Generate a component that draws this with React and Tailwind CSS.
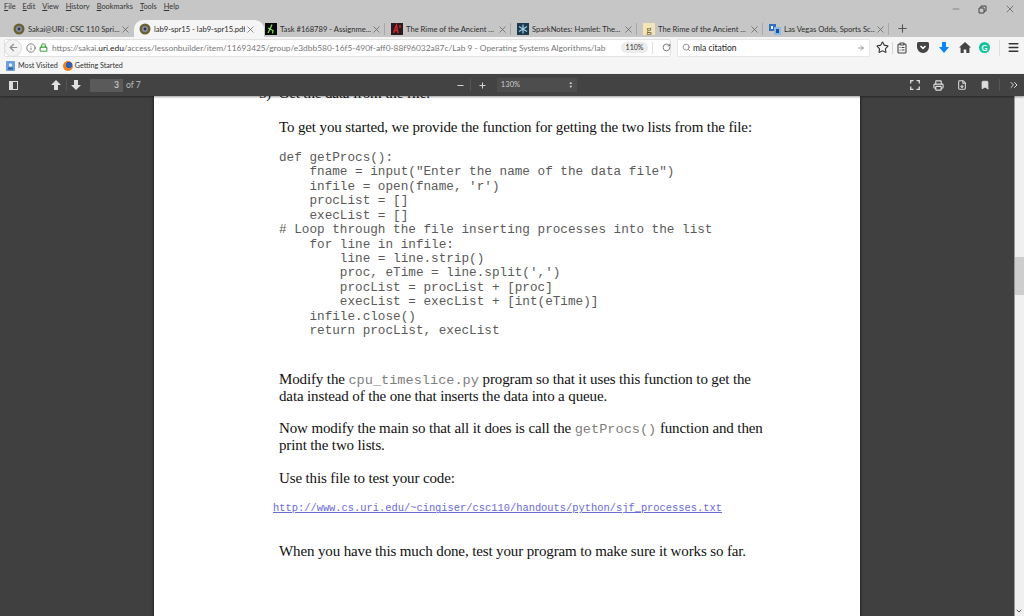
import { Star, ArrowRight, Search, Info, Lock, RotateCw, ArrowLeft, Plus, Minus, X, Menu, ClipboardList, Printer, Bookmark, ChevronsRight, ChevronDown, FileDown } from 'lucide-react';

const tabs = [
  { title: 'Sakai@URI : CSC 110 Spri...', icon: 'sakai' },
  { title: 'lab9-spr15 - lab9-spr15.pdf', icon: 'sakai', active: true },
  { title: 'Task #168789 - Assignme...', icon: 'task', sep: true },
  { title: 'The Rime of the Ancient ...', icon: 'rime', sep: true },
  { title: 'SparkNotes: Hamlet: The...', icon: 'spark', sep: true },
  { title: 'The Rime of the Ancient ...', icon: 'g', sep: true },
  { title: 'Las Vegas Odds, Sports Sc...', icon: 'vegas', sep: true },
];

const code = [
  'def getProcs():',
  '    fname = input("Enter the name of the data file")',
  "    infile = open(fname, 'r')",
  '    procList = []',
  '    execList = []',
  '# Loop through the file inserting processes into the list',
  '    for line in infile:',
  '        line = line.strip()',
  "        proc, eTime = line.split(',')",
  '        procList = procList + [proc]',
  '        execList = execList + [int(eTime)]',
  '    infile.close()',
  '    return procList, execList',
];

function Favicon({ type }) {
  if (type === 'sakai') {
    return (
      <svg width="12" height="12" viewBox="0 0 12 12" className="shrink-0">
        <circle cx="6" cy="6" r="5.5" fill="#6b6233" />
        <circle cx="6" cy="6" r="3" fill="#8c8fa8" />
        <circle cx="6" cy="6" r="1.4" fill="#2f3350" />
      </svg>
    );
  }
  if (type === 'task') {
    return (
      <svg width="12" height="12" viewBox="0 0 12 12" className="shrink-0">
        <rect width="12" height="12" fill="#050505" />
        <path d="M7 1.5 5 6 3 10M5 6l3 1.5-.5 3M5 6 3 5" stroke="#7fe05a" strokeWidth="1.3" fill="none" />
      </svg>
    );
  }
  if (type === 'rime') {
    return (
      <svg width="12" height="12" viewBox="0 0 12 12" className="shrink-0">
        <rect width="12" height="12" fill="#2a1a20" />
        <path d="M2.5 10 5.5 2 7 10M3.5 7.5h3M9 2v3" stroke="#d0252d" strokeWidth="1.4" fill="none" />
      </svg>
    );
  }
  if (type === 'spark') {
    return (
      <svg width="12" height="12" viewBox="0 0 12 12" className="shrink-0">
        <rect width="12" height="12" fill="#1d3a4d" />
        <path d="M6 1.5v9M2 3.5l8 5M10 3.5l-8 5" stroke="#9ed0e8" strokeWidth="1.2" />
      </svg>
    );
  }
  if (type === 'g') {
    return (
      <span className="flex h-3 w-3 shrink-0 items-center justify-center bg-[#f2e5b8] font-['Liberation_Serif',serif] text-[11px] leading-none text-[#6b4f1f]">g</span>
    );
  }
  return (
    <svg width="12" height="12" viewBox="0 0 12 12" className="shrink-0">
      <rect x="0" y="1" width="7" height="7" fill="#2f6fc4" />
      <rect x="5" y="4" width="7" height="8" fill="#8db8e8" />
      <rect x="2" y="3" width="2" height="3" fill="#fff" />
      <rect x="7" y="6" width="3" height="4" fill="#1d4f96" />
    </svg>
  );
}

function Tab({ title, icon, active, sep }) {
  return (
    <div className={`flex h-[18px] shrink-0 items-center pr-[2px] ${active ? '-mr-[3px] -ml-[1px] w-[130px] rounded-t-[9px] bg-[#f5f5f5] pl-[5px]' : 'w-[126px] pl-[4px]'}`}>
      <Favicon type={icon} />
      <span className="ml-[3px] flex-1 overflow-hidden whitespace-pre font-['Lato',sans-serif] text-[7.6px] leading-[18px] text-[#2e2e2e]">{title}</span>
      <X size={11} strokeWidth={1.4} className={`shrink-0 text-[#555] ${active ? 'mr-[6px]' : 'mr-[2px]'}`} />
      {sep && <span className="h-[12px] w-px shrink-0 bg-[#a9a9a9]" />}
    </div>
  );
}

function Para({ className = '', children }) {
  return <p className={`whitespace-pre font-['Liberation_Serif',serif] text-[15px] leading-[17px] tracking-[-0.13px] text-[#111] ${className}`}>{children}</p>;
}

function Mono({ children }) {
  return <span className="font-['Liberation_Mono',monospace] text-[13.6px] tracking-normal text-[#808080]">{children}</span>;
}

function MenuItem({ first, rest }) {
  return <span><span className="underline">{first}</span>{rest}</span>;
}

export default function App() {
  return (
    <div className="flex h-[616px] w-[1024px] flex-col overflow-hidden bg-[#c6c6c6] font-['Lato',sans-serif]">
      {/* menu bar + window buttons */}
      <div className="flex h-[20px] shrink-0 items-start justify-between">
        <div className="flex gap-[7px] pl-[4px] pt-[1px] text-[7.4px] leading-[12px] text-[#333]">
          <MenuItem first="F" rest="ile" />
          <MenuItem first="E" rest="dit" />
          <MenuItem first="V" rest="iew" />
          <MenuItem first="H" rest="istory" />
          <MenuItem first="B" rest="ookmarks" />
          <MenuItem first="T" rest="ools" />
          <MenuItem first="H" rest="elp" />
        </div>
        <div className="flex items-center gap-[17px] pr-[8px] pt-[3px] text-[#444]">
          <Minus size={10} strokeWidth={1.2} />
          <svg width="9" height="9" viewBox="0 0 9 9" fill="none" stroke="currentColor"><path d="M1 3h5v5H1zM3 3V1h5v5H6" /></svg>
          <X size={12} strokeWidth={1.2} />
        </div>
      </div>

      {/* tabs */}
      <div className="flex h-[17px] shrink-0 items-start pl-[9px]">
        {tabs.map((t, i) => <Tab key={i} {...t} />)}
        <Plus size={13} strokeWidth={2} className="ml-[5px] mt-[2px] text-[#555]" />
      </div>

      {/* nav bar */}
      <div className="flex h-[21px] shrink-0 items-center bg-[#f5f5f5] pl-[4px]">
        <div className="relative flex h-[18px] w-[667px] items-center rounded-[2px] border border-[#e2e2e2] bg-white pl-[20px]">
          <span className="absolute left-[-1px] top-[-1px] flex h-[18px] w-[18px] items-center justify-center rounded-full border border-[#dcdcdc] bg-[#f3f3f3]">
            <ArrowLeft size={11} strokeWidth={2.6} className="text-[#8f8f8f]" />
          </span>
          <Info size={10} className="ml-[1px] shrink-0 text-[#666]" />
          <Lock size={9} strokeWidth={3} className="ml-[3px] shrink-0 text-[#3fa33f]" />
          <span className="ml-[4px] w-[554px] shrink-0 overflow-hidden whitespace-pre text-[8.4px] leading-[16px] text-[#777]">
            https://sakai.<span className="text-[#222]">uri.edu</span>/access/lessonbuilder/item/11693425/group/e3dbb580-16f5-490f-aff0-88f96032a87c/Lab 9 - Operating Systems Algorithms/lab9-sp
          </span>
          <span className="ml-[15px] flex h-[11px] w-[27px] shrink-0 items-center justify-center rounded-full bg-[#ececec] text-[7px] text-[#333]">110%</span>
          <span className="ml-[4px] h-[12px] w-px shrink-0 bg-[#ddd]" />
          <RotateCw size={9} className="ml-[9px] shrink-0 text-[#555]" />
        </div>
        <div className="ml-[6px] flex h-[18px] w-[193px] items-center border border-[#e8e8e8] bg-white pl-[4px] pr-[4px]">
          <Search size={9} className="text-[#777]" />
          <span className="ml-[2px] flex-1 text-[8.5px] leading-[16px] text-[#222]">mla citation</span>
          <ArrowRight size={8} strokeWidth={2.5} className="text-[#888]" />
        </div>
        <Star size={13} strokeWidth={2} className="ml-[6px] text-[#333]" />
        <span className="ml-[3px] h-[12px] w-px bg-[#d5d5d5]" />
        <ClipboardList size={12} strokeWidth={2.2} className="ml-[3px] text-[#444]" />
        <svg width="12" height="11" viewBox="0 0 12 11" className="ml-[9px]">
          <path d="M1.5 0h9A1.5 1.5 0 0 1 12 1.5V5a6 6 0 0 1-12 0V1.5A1.5 1.5 0 0 1 1.5 0z" fill="#444" />
          <path d="M3.5 4 6 6.4 8.5 4" stroke="#fff" strokeWidth="1.5" fill="none" />
        </svg>
        <svg width="10" height="11" viewBox="0 0 10 11" className="ml-[10px]"><path d="M3 0h4v5h3L5 11 0 5h3z" fill="#0a84ff" /></svg>
        <svg width="12" height="11" viewBox="0 0 12 11" className="ml-[10px]"><path d="M6 0 12 5.6h-1.6V11H7.3V7.4H4.7V11H1.6V5.6H0z" fill="#444" /></svg>
        <span className="ml-[8px] flex h-[11px] w-[11px] items-center justify-center rounded-full bg-[#15c39a] text-[8px] font-bold leading-none text-white">G</span>
        <span className="ml-[9px] h-[16px] w-px bg-[#e0e0e0]" />
        <Menu size={13} strokeWidth={2.5} className="ml-[7px] text-[#333]" />
      </div>

      {/* bookmarks */}
      <div className="flex h-[16px] shrink-0 items-center bg-[#f5f5f5] pl-[6px] text-[7.2px] text-[#333]">
        <svg width="9" height="10" viewBox="0 0 9 10"><rect width="9" height="10" rx="1" fill="#6d9fdc" /><circle cx="4.5" cy="4" r="1.7" fill="#e7f0fb" /><rect x="2" y="6.5" width="5" height="2" fill="#2c5e9f" /></svg>
        <span className="ml-[3px]">Most Visited</span>
        <span className="ml-[5px] h-[10px] w-[10px] rounded-full bg-[radial-gradient(circle_at_60%_40%,#2e5fb8_35%,#f0801e_40%)]" />
        <span className="ml-[2px]">Getting Started</span>
      </div>

      {/* pdf toolbar */}
      <div className="z-10 flex h-[22px] shrink-0 items-center bg-[#434343] pl-[9px] text-[8.6px] text-[#bdbdbd] shadow-[0_1px_2px_rgba(0,0,0,0.4)]">
        <svg width="9" height="9" viewBox="0 0 9 9" className="text-[#ddd]" fill="none" stroke="currentColor"><rect x="0.5" y="0.5" width="8" height="8" /><rect x="1" y="1" width="2.5" height="7" fill="currentColor" /></svg>
        <svg width="10" height="10" viewBox="0 0 10 10" className="ml-[33px]"><path d="M5 0 10 5H7v5H3V5H0z" fill="#e0e0e0" /></svg>
        <span className="ml-[5px] h-[12px] w-px bg-[#555]" />
        <svg width="10" height="10" viewBox="0 0 10 10" className="ml-[4px]"><path d="M5 10 0 5h3V0h4v5h3z" fill="#e0e0e0" /></svg>
        <span className="ml-[9px] flex h-[13px] w-[33px] items-center justify-end bg-[#5a5a5a] pr-[4px] text-[#ddd]">3</span>
        <span className="ml-[3px]">of 7</span>
        <Minus size={9} strokeWidth={2.5} className="ml-[315px] text-[#ddd]" />
        <span className="ml-[5px] h-[12px] w-px bg-[#555]" />
        <Plus size={9} strokeWidth={2.5} className="ml-[7px] text-[#ddd]" />
        <span className="ml-[10px] flex h-[14px] w-[80px] items-center justify-between bg-[#4d4d4d] pl-[4px] pr-[4px] text-[7.6px] text-[#ccc]">
          130%
          <span className="flex flex-col text-[4px] leading-[4px] text-[#ddd]"><span>▲</span><span>▼</span></span>
        </span>
        <svg width="10" height="10" viewBox="0 0 10 10" className="ml-[333px]" fill="none" stroke="#ddd" strokeWidth="1.3"><path d="M0.7 3.5V.7h2.8M6.5.7h2.8v2.8M9.3 6.5v2.8H6.5M3.5 9.3H.7V6.5" /></svg>
        <Printer size={11} strokeWidth={2.5} className="ml-[13px] text-[#ddd]" />
        <FileDown size={10} strokeWidth={2.5} className="ml-[13px] text-[#ddd]" />
        <Bookmark size={10} fill="#ddd" className="ml-[13px] text-[#ddd]" />
        <span className="ml-[9px] h-[12px] w-px bg-[#555]" />
        <ChevronsRight size={12} strokeWidth={2} className="ml-[8px] text-[#ddd]" />
      </div>

      {/* viewer */}
      <div className="flex min-h-0 flex-1">
        <div className="flex min-w-0 flex-1 justify-center overflow-hidden bg-[#404040]">
          <div className="h-[560px] w-[706px] shrink-0 overflow-hidden bg-white pl-[125px] shadow-[0_0_3px_rgba(0,0,0,0.8)]">
            <Para className="-ml-[20px] -mt-[11px]">5)  Get the data from the file.</Para>
            <Para className="mt-[17px]">To get you started, we provide the function for getting the two lists from the file:</Para>
            <pre className="mt-[15px] font-['Liberation_Mono',monospace] text-[12.68px] leading-[14.42px] text-[#5a5a5a]">{code.join('\n')}</pre>
            <Para className="mt-[33px]">Modify the <Mono>cpu_timeslice.py</Mono> program so that it uses this function to get the</Para>
            <Para className="-mt-[1px]">data instead of the one that inserts the data into a queue.</Para>
            <Para className="mt-[15px]">Now modify the main so that all it does is call the <Mono>getProcs()</Mono> function and then</Para>
            <Para className="-mt-[1px]">print the two lists.</Para>
            <Para className="mt-[16px]">Use this file to test your code:</Para>
            <p className="-ml-[6px] mt-[14px] whitespace-pre font-['Liberation_Mono',monospace] text-[10.4px] leading-[14px] text-[#6a6ad8] underline">http://www.cs.uri.edu/~cingiser/csc110/handouts/python/sjf_processes.txt</p>
            <Para className="mt-[28px]">When you have this much done, test your program to make sure it works so far.</Para>
          </div>
        </div>
        {/* scrollbar */}
        <div className="flex w-[10px] shrink-0 flex-col border-l border-[#999] bg-[#f0f0f0]">
          <div className="mt-[161px] h-[38px] bg-[#cdcdcd]" />
          <ChevronDown size={8} strokeWidth={3} className="mb-[1px] mt-auto text-[#555]" />
        </div>
      </div>
    </div>
  );
}
